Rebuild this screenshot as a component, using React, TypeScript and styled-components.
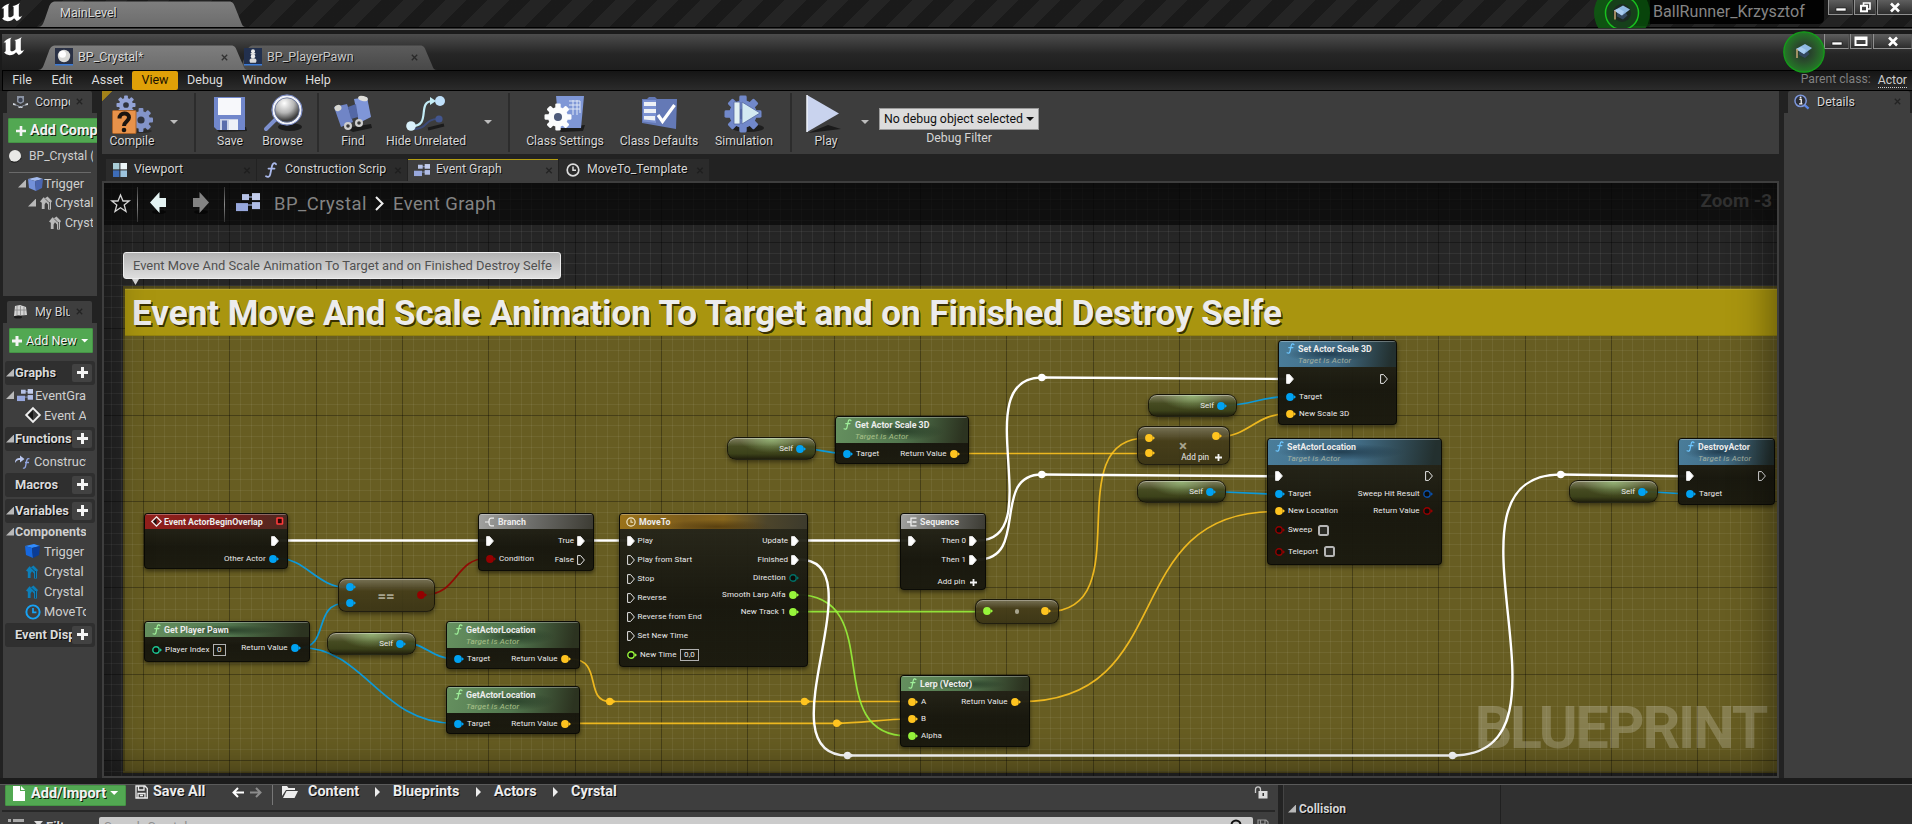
import React from 'react';
import styled, { createGlobalStyle, css } from 'styled-components';

const Global = createGlobalStyle`
  * { box-sizing: border-box; }
  html, body { margin: 0; padding: 0; background: #1b1b1b; overflow: hidden; }
  body { font-family: Roboto, "Liberation Sans", sans-serif; font-size: 12.5px; color: #d6d6d6; }
  svg { display: block; flex: none; overflow: visible; }
`;

const shadow = css`text-shadow: 1px 1px 0 rgba(0, 0, 0, 0.85);`;

/* ---------- window frame ---------- */

const Screen = styled.div`
  width: 1912px;
  height: 824px;
  display: flex;
  flex-direction: column;
  overflow: hidden;
  background: #1b1b1b;
`;

const MainTitleBar = styled.div`
  position: relative;
  height: 27px;
  flex: none;
  display: flex;
  align-items: flex-end;
  justify-content: space-between;
  background: linear-gradient(rgba(0, 0, 0, 0.1), rgba(0, 0, 0, 0.1)),
    repeating-linear-gradient(135deg, #1d1d1d 0 15px, #282828 15px 30px);
`;

const Rule = styled.div`
  height: 7px;
  flex: none;
  border-top: 1px solid #000;
  background: linear-gradient(#303030 1px, #686868 1px 2px, #1b1b1b 2px);
`;

const TitleBar = styled.div`
  position: relative;
  height: 36px;
  flex: none;
  margin-left: 2px;
  display: flex;
  justify-content: space-between;
  align-items: flex-end;
  background: linear-gradient(#4c4c4c, #262626 55%, #1e1e1e);
`;

const TitleLeft = styled.div`
  display: flex;
  align-items: flex-end;
  height: 100%;
`;

const LogoSlot = styled.div<{ $w: number }>`
  width: ${p => p.$w}px;
  height: 100%;
  padding: 3px 0 0 1px;
`;

const DocTab = styled.div<{ $w: number; $h: number; $active?: boolean; $overlap?: boolean }>`
  position: relative;
  width: ${p => p.$w}px;
  height: ${p => p.$h}px;
  margin-left: ${p => (p.$overlap ? -12 : 0)}px;
  display: flex;
  align-items: center;
  padding-left: ${p => (p.$h > 25 ? 22 : p.$overlap ? 8 : 17)}px;
  padding-bottom: 1px;
  color: ${p => (p.$active ? '#d8d8d8' : '#c8c8c8')};
  z-index: ${p => (p.$active ? 2 : 1)};
  ${shadow}
`;

const TabShape = styled.svg`
  position: absolute;
  inset: 0;
  z-index: -1;
`;

const DocTitle = styled.span<{ $flush?: boolean }>`
  flex: 1;
  padding: 0 0 2px ${p => (p.$flush ? 0 : 5)}px;
  font-size: 12.5px;
  white-space: nowrap;
`;

const CloseMark = styled.span<{ $right?: number }>`
  width: 7px;
  height: 7px;
  margin-right: ${p => p.$right ?? 0}px;
  flex: none;
  opacity: 0.75;
`;

const WindowButtons = styled.div<{ $w: number }>`
  display: flex;
  gap: 1px;
  width: ${p => p.$w}px;
  height: 15px;
  align-self: flex-start;
`;

const WindowButton = styled.div<{ $w: number }>`
  width: ${p => p.$w}px;
  height: 15px;
  flex: none;
  display: flex;
  align-items: center;
  justify-content: center;
  border: 1px solid #909090;
  border-top: 0;
  border-right-color: #555;
  background: linear-gradient(#5e5e5e, #2d2d2d);
`;

const ProjectArea = styled.div`
  display: flex;
  height: 27px;
  align-items: flex-start;
`;

const ProjectPlate = styled.div`
  height: 24px;
  width: 190px;
  margin-right: 4px;
  padding-left: 19px;
  border-radius: 0 0 5px 0;
  background: #020202;
  color: #858585;
  font-size: 16.1px;
  line-height: 24px;
  white-space: nowrap;
`;

const TutorialBadge = styled.svg<{ $x: number; $y: number; $clip?: boolean }>`
  position: absolute;
  left: ${p => p.$x}px;
  top: ${p => p.$y}px;
  z-index: 3;
  overflow: ${p => (p.$clip ? 'hidden' : 'visible')};
`;

const MenuBar = styled.div`
  height: 21px;
  flex: none;
  margin-left: 2px;
  display: flex;
  align-items: center;
  border: solid #000;
  border-width: 1px 0 1px 1px;
  background: linear-gradient(#151515, #2b2b2b);
  line-height: 18px;
`;

const MenuItem = styled.div<{ $w: number; $on?: boolean }>`
  width: ${p => p.$w}px;
  height: 19px;
  text-align: center;
  font-size: 12.5px;
  border-radius: 2px;
  white-space: nowrap;
  color: ${p => (p.$on ? '#1a1200' : '#dcdcdc')};
  background: ${p => (p.$on ? '#dfa008' : 'transparent')};
`;

const ParentClass = styled.div`
  margin-left: auto;
  display: flex;
  align-items: center;
  gap: 7px;
  padding-right: 5px;
  color: #808080;
  font-size: 12.2px;
  span { line-height: 16px; margin-top: -3px; }
  b { font-weight: 400; color: #cdcdcd; line-height: 14px; border-bottom: 1px dotted #cdcdcd; }
`;

/* ---------- columns ---------- */

const Workspace = styled.div`
  height: 693px;
  flex: none;
  display: flex;
  padding-left: 3px;
  background: #222;
  border-bottom: 6px solid #1b1b1b;
`;

const SideColumn = styled.div`
  width: 94px;
  flex: none;
  display: flex;
  flex-direction: column;
  overflow: hidden;
  margin-right: 5px;
`;

const PanelTab = styled.div<{ $w: number; $gap?: number }>`
  width: ${p => p.$w}px;
  height: 22px;
  margin: ${p => p.$gap ?? 0}px 0 0 4px;
  flex: none;
  display: flex;
  align-items: center;
  padding: 0 9px 1px 6px;
  background: #3e3e3e;
  border-radius: 2px 2px 0 0;
  ${shadow}
`;

const PanelTitle = styled.span`
  flex: 1;
  margin: 0 6px 1px 7px;
  overflow: hidden;
  white-space: nowrap;
  font-size: 12.4px;
`;

const ComponentsPanel = styled.div`
  height: 183px;
  flex: none;
  padding-top: 5px;
  background: #3e3e3e;
`;

const BlueprintPanel = styled.div`
  flex: 1;
  padding-top: 5px;
  background: #3e3e3e;
  overflow: hidden;
`;

const GreenButton = styled.div<{ $w: number; $h: number; $ml: number; $size: number; $bold?: boolean; $pl?: number; $lift?: number }>`
  width: ${p => p.$w}px;
  height: ${p => p.$h}px;
  margin-left: ${p => p.$ml}px;
  padding: 0 0 ${p => p.$lift ?? 0}px ${p => p.$pl ?? 4}px;
  flex: none;
  display: flex;
  align-items: center;
  gap: 4px;
  overflow: hidden;
  white-space: nowrap;
  background: #52a852;
  border: 1px solid #459445;
  border-radius: 1px;
  color: #f2f2f2;
  font-size: ${p => p.$size}px;
  font-weight: ${p => (p.$bold ? 700 : 400)};
  ${shadow}
`;

const TreeRow = styled.div<{ $indent: number; $w?: number; $gap?: number; $h?: number; $bold?: boolean; $size?: number }>`
  height: ${p => p.$h ?? 20}px;
  width: ${p => p.$w ?? 90}px;
  padding: 0 0 1px ${p => p.$indent}px;
  display: flex;
  align-items: center;
  gap: ${p => p.$gap ?? 4}px;
  overflow: hidden;
  white-space: nowrap;
  font-size: ${p => p.$size ?? 12.8}px;
  font-weight: ${p => (p.$bold ? 700 : 400)};
  color: #cfcfcf;
`;

const Divider = styled.div`
  height: 1px;
  margin: 3px 6px 2px;
  background: #6a6a6a;
`;

const Category = styled.div<{ $mt?: number }>`
  height: 24px;
  width: 90px;
  margin: ${p => p.$mt ?? 0}px 0 0 2px;
  padding-bottom: 1px;
  display: flex;
  align-items: center;
  background: #2f2f2f;
  border-radius: 3px;
  font-weight: 700;
  font-size: 12.8px;
  color: #dadada;
  ${shadow}
`;

const Caret = styled.span<{ $hidden?: boolean }>`
  width: 8px;
  height: 8px;
  margin: 0 1px;
  flex: none;
  visibility: ${p => (p.$hidden ? 'hidden' : 'visible')};
  background: #b9b9b9;
  clip-path: polygon(100% 0, 100% 100%, 0 100%);
`;

const CategoryName = styled.span`
  flex: 1;
  overflow: hidden;
  white-space: nowrap;
`;

const PlusButton = styled.span`
  width: 20px;
  height: 18px;
  margin-right: 3px;
  flex: none;
  display: flex;
  align-items: center;
  justify-content: center;
  background: #424242;
  border-radius: 2px;
`;

const CenterColumn = styled.div`
  width: 1677px;
  flex: none;
  display: flex;
  flex-direction: column;
`;

const DetailsColumn = styled.div`
  margin-left: 5px;
  flex: 1;
  display: flex;
  flex-direction: column;
`;

const DetailsBody = styled.div`
  flex: 1;
  background: #3e3e3e;
`;

/* ---------- toolbar ---------- */

const Toolbar = styled.div`
  height: 63px;
  flex: none;
  display: flex;
  align-items: flex-start;
  background: linear-gradient(135deg, #a38319 7px, transparent 7.5px), #3d3d3d;
`;

const Tool = styled.div<{ $w: number }>`
  width: ${p => p.$w}px;
  height: 63px;
  padding-top: 4px;
  flex: none;
  display: flex;
  flex-direction: column;
  align-items: center;
  font-size: 12.2px;
  line-height: 17px;
  white-space: nowrap;
  ${shadow}
`;

const ToolArrow = styled.div<{ $ml?: number }>`
  width: 24px;
  margin: 29px 0 0 ${p => p.$ml ?? 0}px;
  display: flex;
  justify-content: center;
`;

const Down = styled.span<{ $c?: string; $s?: number }>`
  width: ${p => (p.$s ?? 4) * 2}px;
  height: ${p => p.$s ?? 4}px;
  flex: none;
  background: ${p => p.$c ?? '#bdbdbd'};
  clip-path: polygon(0 0, 100% 0, 50% 100%);
`;

const ToolSeparator = styled.div`
  width: 2px;
  height: 59px;
  margin: 2px 8px 0;
  flex: none;
  background: #2c2c2c;
`;

const DebugFilter = styled.div`
  width: 160px;
  margin-left: 2px;
  padding-top: 17px;
  text-align: center;
  font-size: 12.3px;
`;

const Combo = styled.div`
  height: 22px;
  margin-bottom: 1px;
  display: flex;
  align-items: center;
  justify-content: center;
  gap: 3px;
  background: #dcdcdc;
  border: 1px solid #9b9b9b;
  color: #101010;
  white-space: nowrap;
`;

const GraphTabs = styled.div`
  height: 27px;
  flex: none;
  display: flex;
  gap: 1px;
  padding: 5px 0 0 4px;
`;

const GraphTab = styled.div<{ $on?: boolean }>`
  width: 150px;
  height: 22px;
  display: flex;
  align-items: center;
  padding: 0 10px 1px 6px;
  font-size: 12.3px;
  background: ${p => (p.$on ? '#3e3e3e' : '#2b2b2b')};
  border-top: ${p => (p.$on ? '1px solid #b39d10' : '1px solid #2b2b2b')};
  ${shadow}
  svg { width: 16px; }
`;

const GraphTabName = styled.span`
  flex: 1;
  margin: 0 0 2px 6px;
  white-space: nowrap;
`;

/* ---------- graph ---------- */

const GraphFrame = styled.div`
  flex: 1;
  border: 2px solid #3e3e3e;
  display: flex;
`;

const Canvas = styled.div`
  position: relative;
  flex: 1;
  overflow: hidden;
  background: #262626;
`;

const CommentBox = styled.div`
  position: absolute;
  left: 19px;
  top: 103px;
  right: -20px;
  height: 487px;
  background: #675d22;
  border: 2px solid #51491a;
`;

const Layer = styled.svg`
  position: absolute;
  left: 0;
  top: 0;
`;

const CommentTitle = styled.div`
  position: absolute;
  left: 21px;
  top: 106px;
  right: 0;
  height: 47px;
  padding-left: 7px;
  background: #a9950f;
  border-top: 1px solid #b5a228;
  border-bottom: 1px solid #93820f;
  color: #ececec;
  font-weight: 700;
  font-size: 35px;
  line-height: 47px;
  white-space: nowrap;
  text-shadow: 1.5px 1.5px 0 rgba(40, 34, 0, 0.9);
`;

const Bubble = styled.div`
  position: absolute;
  left: 19px;
  top: 69px;
  width: 438px;
  height: 27px;
  padding-left: 9px;
  border: 1px solid #ededed;
  border-radius: 3px;
  background: linear-gradient(#b2b2b2, #dedede);
  color: #505050;
  font-size: 12.92px;
  line-height: 25px;
  white-space: nowrap;
  &::after {
    content: '';
    position: absolute;
    left: 8px;
    top: 26px;
    width: 7px;
    height: 6px;
    background: #cfcfcf;
    clip-path: polygon(0 0, 100% 0, 50% 100%);
  }
`;

const Vignette = styled.div`
  position: absolute;
  inset: 0;
  box-shadow: inset 0 0 44px rgba(0, 0, 0, 0.55);
`;

const Watermark = styled.div`
  position: absolute;
  right: 11px;
  bottom: 13px;
  font-weight: 700;
  font-size: 59px;
  letter-spacing: -2.2px;
  line-height: 70px;
  color: rgba(255, 255, 255, 0.21);
`;

const NavBar = styled.div`
  position: absolute;
  left: 0;
  right: 0;
  top: 0;
  height: 42px;
  display: flex;
  align-items: center;
  background: rgba(6, 6, 6, 0.68);
  color: #838383;
  font-size: 18.4px;
  letter-spacing: 0.45px;
  white-space: nowrap;
`;

const NavSlot = styled.div<{ $w: number; $pl?: number }>`
  width: ${p => p.$w}px;
  height: 100%;
  padding: 0 0 2px ${p => p.$pl ?? 0}px;
  flex: none;
  display: flex;
  align-items: center;
`;

const NavLine = styled.div`
  width: 1px;
  height: 35px;
  flex: none;
  background: linear-gradient(#333, #8b8b8b, #333);
`;

const ZoomLabel = styled.div`
  margin: -6px 5px 0 auto;
  font-weight: 700;
  font-size: 18.8px;
  letter-spacing: 0;
  color: #303030;
`;

type Tone = 'event' | 'plain' | 'pure' | 'call' | 'time';

const tones: Record<Tone, string> = {
  event: 'linear-gradient(90deg, #93201c, #7c1c19 55%, #4a2a22)',
  plain: 'linear-gradient(100deg, #a2a2a0, #6f6f6c 45%, #3c3b33)',
  pure: 'radial-gradient(ellipse at 50% 55%, rgba(30,50,32,.75), rgba(30,50,32,0) 45%), linear-gradient(100deg, #65905f, #52774f 50%, #2c3320 95%)',
  call: 'radial-gradient(ellipse at 42% 50%, rgba(24,48,64,.75), rgba(24,48,64,0) 45%), linear-gradient(100deg, #4a7d9a, #426d87 50%, #23302f 95%)',
  time: 'radial-gradient(ellipse at 52% 85%, rgba(60,40,8,.6), rgba(60,40,8,0) 40%), linear-gradient(100deg, #9b731a, #7d5d1c 35%, #86651c 55%, #4d452b 78%, #3c3a2c)',
};

const NodeBox = styled.div<{ $x: number; $y: number; $w: number; $h: number }>`
  position: absolute;
  left: ${p => p.$x - 104}px;
  top: ${p => p.$y - 183}px;
  width: ${p => p.$w}px;
  height: ${p => p.$h}px;
  border: 1px solid rgba(8, 8, 4, 0.85);
  border-radius: 4px;
  background: linear-gradient(rgba(40, 40, 28, 0.96), rgba(22, 22, 14, 0.96) 60%, rgba(25, 25, 15, 0.96));
  box-shadow: 0 2px 4px rgba(0, 0, 0, 0.5);
  overflow: hidden;
`;

const NodeHeader = styled.div<{ $tone: Tone; $tall?: boolean }>`
  position: relative;
  height: ${p => (p.$tall ? 26 : 15)}px;
  padding: 1px 4px 0 6px;
  display: flex;
  gap: 3px;
  background: ${p => tones[p.$tone]};
  box-shadow: inset 0 1px 0 rgba(255, 255, 255, 0.3);
`;

const NodeIcon = styled.div`
  width: 10px;
  height: 13px;
  flex: none;
  display: flex;
  align-items: center;
  justify-content: center;
`;

const NodeNames = styled.div`
  flex: 1;
  white-space: nowrap;
`;

const NodeName = styled.div`
  font-weight: 700;
  font-size: 8.8px;
  line-height: 14px;
  color: #ececec;
`;

const NodeSub = styled.div<{ $tone: Tone }>`
  font-style: italic;
  font-size: 8px;
  letter-spacing: 0.2px;
  line-height: 9px;
  color: ${p => (p.$tone === 'call' ? '#a3b0a0' : '#a9c088')};
`;

const NodeBody = styled.div`
  display: flex;
  justify-content: space-between;
  padding: 2px 7.8px 0 6.5px;
`;

const PinColumn = styled.div<{ $right?: boolean }>`
  display: flex;
  flex-direction: column;
  align-items: ${p => (p.$right ? 'flex-end' : 'flex-start')};
`;

const PinRow = styled.div<{ $h: number; $right?: boolean; $gap: number }>`
  height: ${p => p.$h}px;
  display: flex;
  flex-direction: ${p => (p.$right ? 'row-reverse' : 'row')};
  align-items: center;
  gap: ${p => p.$gap}px;
  font-size: 8px;
  letter-spacing: 0.1px;
  line-height: 10px;
  white-space: nowrap;
  color: #ececec;
`;

const ValueBox = styled.span`
  height: 12px;
  min-width: 12px;
  padding: 0 3px;
  border: 1px solid #b0b0b0;
  text-align: center;
`;

const CheckBox = styled.span`
  width: 11px;
  height: 11px;
  margin-left: 2px;
  border: 2px solid #b5b5b5;
  border-radius: 2.5px;
  background: #2a2a24;
`;

const SelfPill = styled.div<{ $x: number; $y: number }>`
  position: absolute;
  left: ${p => p.$x - 104}px;
  top: ${p => p.$y - 183}px;
  width: 89px;
  height: 23px;
  padding-right: 9px;
  display: flex;
  align-items: center;
  justify-content: flex-end;
  gap: 3px;
  border: 1px solid rgba(20, 18, 6, 0.85);
  border-radius: 9px;
  background: radial-gradient(ellipse 32px 14px at 50% 5%, rgba(160, 200, 130, 0.7), transparent),
    linear-gradient(rgba(130, 130, 100, 0.95), rgba(68, 74, 34, 0.95) 40%, rgba(58, 64, 26, 0.95) 75%, rgba(28, 28, 12, 0.95));
  box-shadow: 0 2px 4px rgba(0, 0, 0, 0.45), inset 0 1px 0 rgba(255, 255, 255, 0.35);
  font-size: 8px;
  line-height: 10px;
  color: #ececec;
`;

const CompactBox = styled.div<{ $x: number; $y: number; $w: number; $h: number; $pad: number }>`
  position: absolute;
  left: ${p => p.$x - 104}px;
  top: ${p => p.$y - 183}px;
  width: ${p => p.$w}px;
  height: ${p => p.$h}px;
  padding: ${p => p.$pad}px 7.5px 0 6.5px;
  display: flex;
  justify-content: space-between;
  border: 1px solid rgba(20, 18, 6, 0.85);
  border-radius: 8px;
  background: linear-gradient(rgba(120, 115, 90, 0.9), rgba(68, 60, 26, 0.92) 38%, rgba(58, 52, 22, 0.92));
  box-shadow: 0 2px 4px rgba(0, 0, 0, 0.45), inset 0 1px 0 rgba(255, 255, 255, 0.3);
`;

const CompactLabel = styled.div<{ $size: number; $mt: number }>`
  margin-top: ${p => p.$mt}px;
  font-weight: 700;
  font-size: ${p => p.$size}px;
  line-height: 16px;
  color: #a7a48e;
`;

const Dot = styled.div`
  width: 4px;
  height: 5px;
  margin-top: 5px;
  border-radius: 2px;
  background: #a7a48e;
`;

const CompactPins = styled.div<{ $mt?: number }>`
  margin-top: ${p => p.$mt ?? 0}px;
`;

const AddPin = styled.div`
  position: absolute;
  right: 7px;
  bottom: 2px;
  display: flex;
  align-items: center;
  gap: 6px;
  font-size: 8.2px;
  line-height: 10px;
  color: #ececec;
`;

/* ---------- content browser strip ---------- */

const BottomArea = styled.div`
  flex: 1;
  display: flex;
  border-top: 1px solid #5a5a5a;
  background: #232323;
  overflow: hidden;
`;

const Browser = styled.div`
  width: 1278px;
  padding-left: 2px;
  background: #3e3e3e;
`;

const BrowserBar = styled.div`
  height: 27px;
  display: flex;
  align-items: flex-start;
  border-bottom: 2px solid #272727;
  padding-left: 3px;
  margin-right: 3px;
`;

const BrowserCell = styled.div<{ $w?: number; $pl?: number; $gap?: number }>`
  width: ${p => (p.$w ? p.$w + 'px' : 'auto')};
  height: 16px;
  padding: 0 0 2px ${p => p.$pl ?? 0}px;
  flex: none;
  display: flex;
  align-items: center;
  gap: ${p => p.$gap ?? 4}px;
  font-weight: 700;
  font-size: 14.4px;
  line-height: 14px;
  color: #ededed;
  white-space: nowrap;
  ${shadow}
`;

const CrumbArrow = styled.span`
  width: 5px;
  height: 10px;
  background: #eee;
  clip-path: polygon(0 0, 100% 50%, 0 100%);
`;

const BrowserLine = styled.div`
  width: 1px;
  height: 20px;
  background: #777;
  margin-right: 9px;
`;

const FilterRow = styled.div`
  display: flex;
  height: 20px;
  margin-top: 5px;
  padding-left: 6px;
`;

const FilterLabel = styled.div`
  width: 75px;
  padding: 3px 0 0 10px;
  display: flex;
  gap: 3px;
  font-weight: 700;
  font-size: 13px;
  line-height: 14px;
  ${shadow}
`;

const SearchField = styled.div`
  width: 1154px;
  height: 24px;
  padding: 1px 10px 0 5px;
  display: flex;
  justify-content: space-between;
  background: #cbcbcb;
  border-radius: 2px;
  color: #8e8e8e;
  font-size: 13px;
  line-height: 17px;
`;

const SaveSearch = styled.svg`
  margin: 2px 0 0 4px;
`;

const DetailsStrip = styled.div`
  margin-left: 5px;
  flex: 1;
  display: flex;
  background: #303030;
  border-left: 1px solid #444;
`;

const PropertyNames = styled.div`
  width: 217px;
  border-right: 1px solid #202020;
  padding: 15px 0 0 3px;
`;

const PropertyGroup = styled.div`
  display: flex;
  align-items: center;
  gap: 2px;
  height: 17px;
  font-weight: 700;
  font-size: 12px;
  ${shadow}
`;

/* ---------- drawings ---------- */

const UnrealLogo = () => (
  <svg width="22" height="19" viewBox="0 0 22 19">
    <path
      fill="#fff"
      d="M0.5 6.2C1.8 3.6 4.4 1.5 8.6 0.6C7.6 1.6 7.4 2.3 7.4 3.4V13.4C7.9 14.3 9.1 14.6 10.3 14.1C11.3 13.6 12.1 13 12.6 12.3V4.6C12.6 3.7 12.1 3.2 11.3 3.1C13.6 2.6 16.8 1.6 18.9 0C18.1 1.2 17.8 2 17.8 3.1V12.4C17.8 13.6 18.3 14 19.1 13.8C19.8 13.6 20.6 13.1 21.3 12.4C20.2 15 18.2 16.9 15.7 18.1L13.1 15.2C11.5 17 9.4 18.3 6.6 18.3C4.1 18.1 1.9 16.9 1.1 15.1C1.9 15.1 2.7 14.8 2.7 13.6V5.9C2.7 4.9 1.5 5.2 0.5 6.2Z"
    />
  </svg>
);

const Cross = () => (
  <svg width="7" height="7" viewBox="0 0 7 7">
    <path d="M.8.8 6.2 6.2M6.2.8.8 6.2" stroke="#1b1b1b" strokeWidth="1.3" />
  </svg>
);

const TabBg = ({ w, h, active }: { w: number; h: number; active?: boolean }) => (
  <TabShape width={w} height={h} viewBox={`0 0 ${w} ${h}`}>
    <defs>
      <linearGradient id={`tab${w}${h}`} x1="0" y1="0" x2="0" y2="1">
        <stop offset="0" stopColor={active ? '#7e7e7e' : '#5c5c5c'} />
        <stop offset="1" stopColor={active ? '#6c6c6c' : '#484848'} />
      </linearGradient>
    </defs>
    <path
      d={`M0 ${h}C4 ${h} 5 ${h - 3} 6.500 ${h - 7}L11 6C12.500 2 14 .5 18 .5H${w - 17}C${w - 13} .5 ${w - 12} 3 ${w - 11} 6L${w - 5} ${h - 5}C${w - 4} ${h - 2} ${w - 3} ${h} ${w} ${h}Z`}
      fill={`url(#tab${w}${h})`}
    />
  </TabShape>
);

const SphereTile = () => (
  <svg width="18" height="18" viewBox="0 0 18 18">
    <rect width="18" height="17" fill="#2a3145" />
    <circle cx="9" cy="8" r="6.2" fill="#d9d9d6" />
    <circle cx="7.500" cy="6.300" r="3.500" fill="#fff" />
    <rect y="16" width="18" height="1.500" fill="#3b7bd8" />
  </svg>
);

const PawnTile = () => (
  <svg width="18" height="18" viewBox="0 0 18 18">
    <rect width="18" height="17" fill="#22304e" />
    <circle cx="9" cy="3.200" r="2" fill="#ededed" />
    <rect x="6.500" y="4.900" width="5" height="1.500" rx=".7" fill="#e0e0e0" />
    <circle cx="9" cy="8.300" r="2.200" fill="#ededed" />
    <path d="M5.500 13C5.500 10.500 7 10.200 9 10.200S12.500 10.500 12.500 13L11.800 14.800H6.200Z" fill="#d9d9d9" />
    <rect y="16" width="18" height="1.500" fill="#3b7bd8" />
  </svg>
);

const Cap = ({ cx, cy }: { cx: number; cy: number }) => (
  <g transform={`translate(${cx} ${cy})`}>
    <path d="M-5-1 3-1 5.500 3 1 7-5 4Z" fill="#33475c" />
    <path d="M-8-2 1-7 8-3 0 3Z" fill="#8fb9e2" />
    <path d="M-3-4 2-1 0 3-8-2Z" fill="#a9cdf0" />
    <path d="M-7-2V7" stroke="#c9a877" strokeWidth="1.500" />
  </g>
);

const MainBadge = () => (
  <TutorialBadge width="56" height="28" viewBox="0 0 56 28" $x={1594} $y={0} $clip>
    <circle cx="28" cy="13" r="28" fill="#0e5a12" opacity=".9" />
    <path d="M28 0H56V26H34Z" fill="#063a08" opacity=".55" />
    <circle cx="28" cy="13" r="16.500" fill="#16401a" stroke="#18c01e" strokeWidth="1.500" />
    <circle cx="28" cy="13" r="9" fill="#1c2a22" />
    <Cap cx={28} cy={12.500} />
  </TutorialBadge>
);

const EditorBadge = () => (
  <TutorialBadge width="42" height="42" viewBox="0 0 42 42" $x={1781} $y={-3}>
    <defs>
      <radialGradient id="bdg">
        <stop offset="0" stopColor="#20302a" />
        <stop offset=".5" stopColor="#2a4f2c" />
        <stop offset="1" stopColor="#237a26" />
      </radialGradient>
    </defs>
    <circle cx="21" cy="21" r="20.200" fill="url(#bdg)" stroke="#12a018" strokeWidth="1.200" />
    <Cap cx={21} cy={20} />
  </TutorialBadge>
);

const MinIcon = () => (
  <svg width="12" height="11"><rect x="1" y="6" width="10" height="3" fill="#fff" stroke="#111" strokeWidth=".6" /></svg>
);
const MaxIcon = () => (
  <svg width="14" height="11"><path d="M1.500 1.500H12.500V9H1.500Z M1.500 3H12.500" fill="none" stroke="#fff" strokeWidth="2" /></svg>
);
const RestoreIcon = () => (
  <svg width="12" height="11"><path d="M4.500 3V1H11V7H9" fill="none" stroke="#fff" strokeWidth="1.600" /><rect x="2" y="3.800" width="6" height="5.500" fill="none" stroke="#fff" strokeWidth="2" /></svg>
);
const XIcon = () => (
  <svg width="12" height="11"><path d="M2 1.500 10 9.500M10 1.500 2 9.500" stroke="#fff" strokeWidth="2.600" /></svg>
);

const Plus = ({ s = 11, w = 3 }: { s?: number; w?: number }) => (
  <svg width={s} height={s} viewBox={`0 0 ${s} ${s}`}>
    <path d={`M${s / 2} 0V${s}M0 ${s / 2}H${s}`} stroke="#f4f4f4" strokeWidth={w} />
  </svg>
);

const GraphIcon = ({ s = 16 }: { s?: number }) => (
  <svg width={s} height={s * 0.8} viewBox="0 0 24 19">
    <path d="M9 4h9M10 12h7" stroke="#7f8cb0" strokeWidth="1.500" />
    <rect x="6" y="1" width="7" height="6" fill="#b6c2e6" />
    <rect x="16" y="0" width="8" height="7" fill="#c3cdec" />
    <rect x="0" y="10" width="12" height="8" fill="#97a7dc" />
    <rect x="16" y="9" width="8" height="7" fill="#b0bde6" />
  </svg>
);

const ViewportIcon = () => (
  <svg width="14" height="14" viewBox="0 0 14 14">
    <rect width="6.400" height="6.400" fill="#a9cdd8" />
    <rect x="7.400" width="6.600" height="6.400" fill="#ecf6f8" />
    <rect y="7.400" width="6.400" height="6.600" fill="#3d6cb8" />
    <rect x="7.400" y="7.400" width="6.600" height="6.600" fill="#9dc4dd" />
  </svg>
);

const FnMark = ({ c, w = 9, h = 13 }: { c: string; w?: number; h?: number }) => (
  <svg width={w} height={h} viewBox="0 0 12 16">
    <path d="M11 2.200C9.500.4 7.600 1 7 4L5.200 12.500C4.700 14.800 3 15.500 1 14.300M3.500 6.600H9.500" fill="none" stroke={c} strokeWidth="1.800" strokeLinecap="round" />
  </svg>
);

const ClockIcon = ({ s, c }: { s: number; c: string }) => (
  <svg width={s} height={s} viewBox="0 0 14 14">
    <circle cx="7" cy="7" r="5.800" fill="none" stroke={c} strokeWidth="1.700" />
    <path d="M7 3.500V7.300H10" fill="none" stroke={c} strokeWidth="1.500" />
  </svg>
);

const HouseIcon = ({ c }: { c: string }) => (
  <svg width="12" height="14" viewBox="0 0 12 14">
    <path d="M0 5.500 3.500 1.200 5 2.200 7.500 .5 12 5 11 6.800V13.500H8V8.500L6 6.200 4.600 8.500V13H1.800V6.800Z" fill={c} />
    <path d="M9.500 6V13M5 2.500 9 6.500" fill="none" stroke="#1f1f1f" strokeWidth=".6" />
  </svg>
);

const CubeIcon = ({ a, b, c }: { a: string; b: string; c: string }) => (
  <svg width="15" height="14" viewBox="0 0 15 14">
    <path d="M0 2 9 0 15 2 7 4Z" fill={a} />
    <path d="M0 2 7 4 8 14 1 11Z" fill={b} />
    <path d="M7 4 15 2 14 11 8 14Z" fill={c} />
  </svg>
);

const Gear = ({ cx, cy, r, fill, hole }: { cx: number; cy: number; r: number; fill: string; hole: string }) => (
  <g transform={`translate(${cx} ${cy})`}>
    {[0, 45, 90, 135].map(a => (
      <rect key={a} x={-r * 0.2} y={-r} width={r * 0.4} height={r * 2} rx={r * 0.08} fill={fill} transform={`rotate(${a})`} />
    ))}
    <circle r={r * 0.74} fill={fill} />
    <circle r={r * 0.3} fill={hole} />
  </g>
);

const CompileIcon = () => (
  <svg width="40" height="38" viewBox="0 0 40 38">
    <ellipse cx="28" cy="36" rx="12" ry="2" fill="#222" opacity=".7" />
    <Gear cx={14} cy={10} r={9.500} fill="#93a3d6" hole="#30343f" />
    <Gear cx={29} cy={25} r={12} fill="#8394c9" hole="#30343f" />
    <rect x=".5" y="15.500" width="23.500" height="23" rx="1" fill="#e8924a" stroke="#a8622a" />
    <path d="M7.500 23.500C7.500 17 17 17 17 22.500C17 26.500 12 26.500 12 31" fill="none" stroke="#1a1410" strokeWidth="4" />
    <circle cx="12" cy="35" r="2.300" fill="#1a1410" />
  </svg>
);

const SaveIcon = () => (
  <svg width="34" height="38" viewBox="0 0 34 38">
    <path d="M4 35 33 32 34 36 6 37Z" fill="#1e1e1e" />
    <path d="M1 2H32V35H4L1 32Z" fill="#7187cb" />
    <path d="M5 3H28V20H5Z" fill="#f7f8fb" />
    <path d="M7 24H25V35H7Z" fill="#c9d1e6" />
    <path d="M9 25.500H14V35H9Z" fill="#5a6dab" />
    <path d="M16 25H25V35H16Z" fill="#eef1f8" />
  </svg>
);

const BrowseIcon = () => (
  <svg width="40" height="38" viewBox="0 0 40 38">
    <defs>
      <radialGradient id="lens" cx=".4" cy=".25" r=".8">
        <stop offset="0" stopColor="#ffffff" />
        <stop offset=".45" stopColor="#b5b5b5" />
        <stop offset=".8" stopColor="#3d3d3d" />
        <stop offset="1" stopColor="#555" />
      </radialGradient>
    </defs>
    <ellipse cx="27" cy="32" rx="12" ry="4" fill="#1b1b1b" />
    <path d="M3 34 13 24" stroke="#7d90cf" strokeWidth="4" strokeLinecap="round" />
    <circle cx="24" cy="15" r="13.500" fill="url(#lens)" stroke="#f1f3fa" strokeWidth="2.400" />
    <circle cx="24" cy="15" r="15.200" fill="none" stroke="#7a8ccc" />
    <circle cx="24" cy="15" r="12.200" fill="none" stroke="#5f6c94" strokeWidth=".8" />
  </svg>
);

const FindIcon = () => (
  <svg width="40" height="38" viewBox="0 0 40 38">
    <path d="M12 33 38 29 39 33 20 37Z" fill="#1b1b1b" />
    <path d="M1 12 14 9 20 27 8 32Z" fill="#7085c6" />
    <path d="M21 4 34 2 38 22 26 28Z" fill="#7f96d8" />
    <path d="M15 12 23 9 25 22 18 24Z" fill="#5468a6" />
    <ellipse cx="5" cy="13" rx="3.500" ry="3" fill="#d7d7d2" transform="rotate(-25 5 13)" />
    <ellipse cx="30" cy="3.500" rx="5" ry="2.500" fill="#e0dfda" transform="rotate(15 30 3.500)" />
    <circle cx="15" cy="31" r="4" fill="#cfcfcf" /><circle cx="15" cy="31" r="1.800" fill="#3a3a3a" />
    <circle cx="26" cy="28" r="4" fill="#cfcfcf" /><circle cx="26" cy="28" r="1.800" fill="#3a3a3a" />
  </svg>
);

const HideIcon = () => (
  <svg width="40" height="38" viewBox="0 0 40 38">
    <path d="M8 34C22 34 18 24 32 24" stroke="#3c4b78" strokeWidth="2" fill="none" />
    <circle cx="33" cy="24" r="3.600" fill="#43568f" />
    <path d="M22 34 38 30" stroke="#1b1b1b" strokeWidth="3" />
    <path d="M6 31C26 31 10 6 27 6" stroke="#c3ecf6" strokeWidth="2.200" fill="none" />
    <path d="M24 2 30 6 24 10Z" fill="#c3ecf6" />
    <circle cx="5" cy="31" r="4.800" fill="#d9f0fb" />
    <circle cx="34" cy="6" r="5" fill="#bfe0fa" />
  </svg>
);

const SettingsIcon = () => (
  <svg width="40" height="38" viewBox="0 0 40 38">
    <path d="M10 33 40 30 38 36 16 37Z" fill="#1b1b1b" />
    <path d="M11 1H39L36 33H14Z" fill="#7f97d6" />
    <path d="M24 6H35V18M24 10H35M24 14H35M28 5V20M32 5V20" stroke="#dfe7f7" fill="none" />
    <Gear cx={13} cy={22} r={13.500} fill="#fbfcfd" hole="#4d5a7a" />
  </svg>
);

const DefaultsIcon = () => (
  <svg width="40" height="38" viewBox="0 0 40 38">
    <path d="M3 4H8L10 2H16L18 4H38L37 34 3 28Z" fill="#6479b6" />
    <path d="M4 5H17V28L4 26.500Z" fill="#7d93d2" />
    <path d="M5 7H17V11H5ZM5 14H17V18H5ZM5 21H16V25.500L5 24.500Z" fill="#eef1f6" />
    <path d="M19 20 23.500 26.500 35.500 10" fill="none" stroke="#fff" strokeWidth="3.200" />
  </svg>
);

const SimulationIcon = () => (
  <svg width="40" height="38" viewBox="0 0 40 38">
    <ellipse cx="24" cy="33" rx="16" ry="4" fill="#1e1e1e" />
    <Gear cx={19} cy={19} r={18.500} fill="#7188ca" hole="#5569a8" />
    <path d="M10 7H16V29H10Z" fill="#e1f0f3" stroke="#56689f" strokeWidth=".8" />
    <path d="M18 7 36 18 18 29Z" fill="#d3e9f2" stroke="#56689f" strokeWidth=".8" />
  </svg>
);

const PlayIcon = () => (
  <svg width="40" height="38" viewBox="0 0 40 38">
    <path d="M2 38 35 34 22 30Z" fill="#1b1b1b" />
    <path d="M1 0 33 18.500 1 37Z" fill="#c9d3ee" />
    <path d="M1 0V37" stroke="#eff3fb" strokeWidth="1.500" />
  </svg>
);

const NavArrow = ({ c, flip }: { c: string; flip?: boolean }) => (
  <svg width="17" height="22" viewBox="0 0 17 22">
    <ellipse cx="9" cy="20" rx="7" ry="2" fill="#000" opacity=".6" />
    <path transform={flip ? 'translate(17 0) scale(-1 1)' : undefined} d="M0 10.500 9.500 0V6H16V15H9.500V21Z" fill={c} />
  </svg>
);

const MagnifierInfo = () => (
  <svg width="16" height="16" viewBox="0 0 17 16">
    <path d="M11 11 15.500 15" stroke="#5b86e8" strokeWidth="2.400" />
    <circle cx="7" cy="6.800" r="6" fill="#2c2e36" stroke="#7d97dc" strokeWidth="1.600" />
    <path d="M5.700 5.300H7.700V10M5.400 10H9" stroke="#f0f0f0" strokeWidth="1.400" fill="none" />
    <circle cx="7" cy="3.200" r="1" fill="#f0f0f0" />
  </svg>
);

const ComponentsIcon = () => (
  <svg width="15" height="14" viewBox="0 0 15 14">
    <path d="M4 1H11V7L7.500 9 4 7Z" fill="#8b93a3" />
    <circle cx="7.500" cy="5" r="2.200" fill="#3a4050" />
    <path d="M0 8 3 9V10.500L0 10ZM15 8 12 9V10.500L15 10ZM5.500 11H9.500V13H5.500Z" fill="#d2d6dc" />
    <path d="M2 9.500 7.500 12 13 9.500" stroke="#8b93a3" fill="none" />
  </svg>
);

const BlueprintIcon = () => (
  <svg width="15" height="14" viewBox="0 0 15 14">
    <path d="M2 1 7 0 13 2 14 10 1 11Z" fill="#d4d4d4" />
    <path d="M4 1 4 10M7.500 1V10M11 2V10M2 5H13" stroke="#888" strokeWidth=".8" />
    <ellipse cx="5" cy="12" rx="4" ry="1.500" fill="#1b1b1b" />
  </svg>
);

const Diamond = ({ s }: { s: number }) => (
  <svg width={s} height={s} viewBox="0 0 14 14">
    <path d="M7 1 13 7 7 13 1 7Z" fill="none" stroke="#f0f0f0" strokeWidth="1.600" />
    <path d="M7 3V11L3 7Z" fill="#151515" />
  </svg>
);

const OverrideIcon = () => (
  <svg width="15" height="14" viewBox="0 0 15 14">
    <path d="M0 8C0 4 2 3 5 3V.5L9.500 4 5 7.500V5C3 5 1.500 5.500 0 8Z" fill="#b9c6ee" />
    <path d="M14.500 4C13 3 12 4 11.600 6L10.600 11C10.200 13 9 13.500 8 13M10 7.500H14" stroke="#91a4e0" strokeWidth="1.300" fill="none" />
  </svg>
);

/* ---------- pins and nodes ---------- */

const C = {
  obj: '#00a2f2',
  vec: '#ffc41f',
  flt: '#97f53b',
  bool: '#940000',
  int: '#1dc592',
  byte: '#006f66',
  struct: '#0a4fa8',
};

const ExecPin = ({ on }: { on?: boolean }) => (
  <svg width="8" height="10" viewBox="0 0 8 10">
    <path d="M.6.6H3.600L7.400 5 3.600 9.400H.6Z" fill={on ? '#fff' : 'none'} stroke="#e6e6e6" strokeWidth="1" />
  </svg>
);

const DataPin = ({ c, on }: { c: string; on?: boolean }) => (
  <svg width="10" height="8" viewBox="0 0 10 8">
    <path d="M8 2.300 10 4 8 5.700Z" fill={c} />
    <circle cx="4" cy="4" r={on ? 3.900 : 3.200} fill={on ? c : '#0c0c08'} stroke={c} strokeWidth={on ? 0 : 1.400} />
  </svg>
);

type Pin = { t?: string; c?: string; on?: boolean; h?: number; value?: string; check?: boolean; add?: boolean };

const Row = ({ p, right }: { p: Pin; right?: boolean }) => {
  const exec = !p.c && !p.add;
  return (
    <PinRow $h={p.h ?? (exec ? 19 : 17.2)} $right={right} $gap={exec ? 3 : p.add ? 5 : 3.5}>
      {p.add ? <Plus s={7} w={1.8} /> : exec ? <ExecPin on={p.on} /> : <DataPin c={p.c!} on={p.on} />}
      {p.t && <span>{p.t}</span>}
      {p.value && <ValueBox>{p.value}</ValueBox>}
      {p.check && <CheckBox />}
    </PinRow>
  );
};

type NodeSpec = {
  x: number; y: number; w: number; h: number;
  tone: Tone; name: string; sub?: boolean;
  left: Pin[]; right: Pin[];
};

const BranchMark = () => (
  <svg width="10" height="10" viewBox="0 0 10 10">
    <path d="M0 5H4M9 1.200H6C4 1.200 4 3 4 5S4 8.800 6 8.800H9" fill="none" stroke="#eee" strokeWidth="1.200" />
  </svg>
);
const SequenceMark = () => (
  <svg width="10" height="10" viewBox="0 0 10 10">
    <path d="M0 5H4M4 .5V9.500M4 1.200H9.500M5.500 5H9.500M4 8.800H9.500" fill="none" stroke="#eee" strokeWidth="1.300" />
  </svg>
);

const headIcon = (n: NodeSpec) => {
  if (n.tone === 'event') return <Diamond s={11} />;
  if (n.tone === 'time') return <ClockIcon s={10} c="#f0e6c8" />;
  if (n.tone === 'plain') return n.name === 'Branch' ? <BranchMark /> : <SequenceMark />;
  return <FnMark c={n.tone === 'pure' ? '#9ff09a' : '#6cc6ff'} w={9} h={11} />;
};

const GraphNode = ({ n }: { n: NodeSpec }) => (
  <NodeBox $x={n.x} $y={n.y} $w={n.w} $h={n.h}>
    <NodeHeader $tone={n.tone} $tall={n.sub}>
      <NodeIcon>{headIcon(n)}</NodeIcon>
      <NodeNames>
        <NodeName>{n.name}</NodeName>
        {n.sub && <NodeSub $tone={n.tone}>Target is Actor</NodeSub>}
      </NodeNames>
      {n.tone === 'event' && (
        <svg width="8" height="12" viewBox="0 0 8 12">
          <rect x="2" y="3" width="5.500" height="6" rx=".5" fill="#2a0505" stroke="#ff3b3b" strokeWidth="1.600" />
        </svg>
      )}
    </NodeHeader>
    <NodeBody>
      <PinColumn>{n.left.map((p, i) => <Row key={i} p={p} />)}</PinColumn>
      <PinColumn $right>{n.right.map((p, i) => <Row key={i} p={p} right />)}</PinColumn>
    </NodeBody>
  </NodeBox>
);

const nodes: NodeSpec[] = [
  { x: 144, y: 513, w: 144, h: 56, tone: 'event', name: 'Event ActorBeginOverlap', left: [], right: [{ on: true }, { t: 'Other Actor', c: C.obj, on: true }] },
  { x: 478, y: 513, w: 116, h: 58, tone: 'plain', name: 'Branch', left: [{ on: true }, { t: 'Condition', c: C.bool, on: true }], right: [{ t: 'True', on: true }, { t: 'False' }] },
  { x: 144, y: 621, w: 166, h: 41, tone: 'pure', name: 'Get Player Pawn', left: [{ t: 'Player Index', c: C.int, value: '0', h: 21 }], right: [{ t: 'Return Value', c: C.obj, on: true }] },
  { x: 446, y: 621, w: 134, h: 48, tone: 'pure', name: 'GetActorLocation', sub: true, left: [{ t: 'Target', c: C.obj, on: true }], right: [{ t: 'Return Value', c: C.vec, on: true }] },
  { x: 446, y: 686, w: 134, h: 48, tone: 'pure', name: 'GetActorLocation', sub: true, left: [{ t: 'Target', c: C.obj, on: true }], right: [{ t: 'Return Value', c: C.vec, on: true }] },
  {
    x: 619, y: 513, w: 189, h: 154, tone: 'time', name: 'MoveTo',
    left: [{ t: 'Play', on: true }, { t: 'Play from Start' }, { t: 'Stop' }, { t: 'Reverse' }, { t: 'Reverse from End' }, { t: 'Set New Time' }, { t: 'New Time', c: C.flt, value: '0,0', h: 20 }],
    right: [{ t: 'Update', on: true }, { t: 'Finished', on: true }, { t: 'Direction', c: C.byte }, { t: 'Smooth Larp Alfa', c: C.flt, on: true }, { t: 'New Track 1', c: C.flt, on: true }],
  },
  { x: 900, y: 513, w: 86, h: 77, tone: 'plain', name: 'Sequence', left: [{ on: true }], right: [{ t: 'Then 0', on: true }, { t: 'Then 1', on: true }, { t: 'Add pin', add: true, h: 26 }] },
  { x: 900, y: 675, w: 130, h: 72, tone: 'pure', name: 'Lerp (Vector)', left: [{ t: 'A', c: C.vec, on: true }, { t: 'B', c: C.vec, on: true }, { t: 'Alpha', c: C.flt, on: true }], right: [{ t: 'Return Value', c: C.vec, on: true }] },
  { x: 835, y: 416, w: 134, h: 48, tone: 'pure', name: 'Get Actor Scale 3D', sub: true, left: [{ t: 'Target', c: C.obj, on: true }], right: [{ t: 'Return Value', c: C.vec, on: true }] },
  { x: 1278, y: 340, w: 119, h: 85, tone: 'call', name: 'Set Actor Scale 3D', sub: true, left: [{ on: true }, { t: 'Target', c: C.obj, on: true, h: 17.5 }, { t: 'New Scale 3D', c: C.vec, on: true }], right: [{}] },
  {
    x: 1267, y: 437.500, w: 175, h: 127, tone: 'call', name: 'SetActorLocation', sub: true,
    left: [{ on: true }, { t: 'Target', c: C.obj, on: true }, { t: 'New Location', c: C.vec, on: true }, { t: 'Sweep', c: C.bool, check: true, h: 20.5 }, { t: 'Teleport', c: C.bool, check: true, h: 23 }],
    right: [{}, { t: 'Sweep Hit Result', c: C.struct }, { t: 'Return Value', c: C.bool }],
  },
  { x: 1678, y: 437.500, w: 97, h: 67, tone: 'call', name: 'DestroyActor', sub: true, left: [{ on: true }, { t: 'Target', c: C.obj, on: true }], right: [{}] },
];

const selves = [[327, 632], [727, 437], [1148, 394], [1137, 480], [1569, 480]];

const wires: { d: string; c: string; w?: number }[] = [
  { c: C.obj, d: 'M279 558.500C305 558.500 318 587.300 346 587.300' },
  { c: C.obj, d: 'M300 647.500C330 647.500 312 603 346 603' },
  { c: C.obj, d: 'M300 647.500C365 647.500 380 723.300 454 723.300' },
  { c: C.obj, d: 'M405 643C425 643 432 658.700 454 658.700' },
  { c: C.obj, d: 'M802 448.500C820 448.500 825 453.300 843 453.300' },
  { c: C.obj, d: 'M1225 405.500C1250 405.500 1262 396.700 1286 396.700' },
  { c: C.obj, d: 'M1214 491.500 1275 494.300' },
  { c: C.obj, d: 'M1646 491.500 1686 494' },
  { c: C.bool, d: 'M424 595C458 595 455 558.500 486 558.500' },
  { c: C.vec, d: 'M571 659C603 659 584 701.500 609.700 701.500H908' },
  { c: C.vec, d: 'M571 723.300H836.700C860 723.300 885 719 908 719' },
  { c: C.flt, d: 'M796 594.700C889 594.700 818 736 908 736' },
  { c: C.flt, d: 'M796 611.700H983' },
  { c: C.vec, d: 'M1048 611.500C1141 611.500 1056 438 1146 438' },
  { c: C.vec, d: 'M960 453.500H1146' },
  { c: C.vec, d: 'M1219 436.700C1248 436.700 1256 414 1286 414' },
  { c: C.vec, d: 'M1021 701.700C1180 701.700 1116 511.500 1275 511.500' },
  { c: '#fff', w: 2.400, d: 'M280 540.500H486' },
  { c: '#fff', w: 2.400, d: 'M586 540.500H627' },
  { c: '#fff', w: 2.400, d: 'M799 540.500H908' },
  { c: '#fff', w: 2.400, d: 'M978 540.500C1050 540.500 965 377.500 1041.800 377.500L1286 379' },
  { c: '#fff', w: 2.400, d: 'M978 559.500C1030 559.500 990 474.500 1041.800 474.500L1275 476.300' },
  { c: '#fff', w: 2.400, d: 'M799 559.500C880 559.500 760 755.500 847.500 755.500H1452.500C1592 755.500 1425 474.500 1560.700 474.500L1686 476.300' },
];

const knots: [number, number, string][] = [
  [1041.8, 377.5, '#fff'], [1041.8, 474.5, '#fff'], [847.5, 755.5, '#fff'], [1452.5, 755.5, '#fff'], [1560.7, 474.5, '#fff'],
  [609.7, 701.5, C.vec], [804.5, 701.5, C.vec], [836.7, 723.2, C.vec],
];

const Grid = () => {
  const step = 86.35;
  const lines: React.ReactNode[] = [];
  for (let i = -4; i < 160; i++) {
    const x = Math.floor(143.4 + (i * step) / 8);
    const major = i % 8 === 0;
    lines.push(<rect key={`v${i}`} x={x} y={183} width={1} height={594} fill={major ? '#000' : '#fff'} opacity={major ? 0.32 : 0.062} />);
  }
  for (let i = -6; i < 52; i++) {
    const y = Math.floor(242.3 + (i * step) / 8);
    const major = i % 8 === 0;
    lines.push(<rect key={`h${i}`} x={104} y={y} width={1675} height={1} fill={major ? '#000' : '#fff'} opacity={major ? 0.32 : 0.062} />);
  }
  return <Layer width="1673" height="594" viewBox="104 183 1673 594">{lines}</Layer>;
};

const Wires = () => (
  <Layer width="1673" height="594" viewBox="104 183 1673 594">
    {wires.map((w, i) => (
      <path key={i} d={w.d} stroke={w.c} strokeWidth={w.w ?? 1.7} fill="none" opacity={w.w ? 1 : 0.88} />
    ))}
    {knots.map(([x, y, c], i) => (
      <g key={i} fill={c}>
        <circle cx={x} cy={y} r={3.7} />
        <path d={`M${x + 3.5} ${y - 2}L${x + 6} ${y}L${x + 3.5} ${y + 2}Z`} />
      </g>
    ))}
  </Layer>
);

const Graph = () => (
  <Canvas>
    <CommentBox />
    <Grid />
    <CommentTitle>Event Move And Scale Animation To Target and on Finished Destroy Selfe</CommentTitle>
    <Watermark>BLUEPRINT</Watermark>
    <Wires />
    {nodes.map((n, i) => <GraphNode key={i} n={n} />)}
    {selves.map(([x, y], i) => (
      <SelfPill key={i} $x={x} $y={y}><span>Self</span><DataPin c={C.obj} on /></SelfPill>
    ))}
    <CompactBox $x={338} $y={578} $w={97} $h={34} $pad={0.5}>
      <CompactPins><Row p={{ c: C.obj, on: true, h: 15.5 }} /><Row p={{ c: C.obj, on: true, h: 15.5 }} /></CompactPins>
      <CompactLabel $size={15} $mt={8}>==</CompactLabel>
      <CompactPins $mt={8}><Row p={{ c: C.bool, on: true, h: 15.5 }} /></CompactPins>
    </CompactBox>
    <CompactBox $x={1137} $y={426} $w={93} $h={39} $pad={3.2}>
      <CompactPins><Row p={{ c: C.vec, on: true, h: 15.5 }} /><Row p={{ c: C.vec, on: true, h: 15.5 }} /></CompactPins>
      <CompactLabel $size={15} $mt={8}>×</CompactLabel>
      <CompactPins $mt={-1.5}><Row p={{ c: C.vec, on: true, h: 15.5 }} /></CompactPins>
      <AddPin>Add pin<Plus s={7} w={1.8} /></AddPin>
    </CompactBox>
    <CompactBox $x={975} $y={599} $w={84} $h={25} $pad={3.7}>
      <CompactPins><Row p={{ c: C.flt, on: true, h: 15.5 }} /></CompactPins>
      <Dot />
      <CompactPins><Row p={{ c: C.vec, on: true, h: 15.5 }} /></CompactPins>
    </CompactBox>
    <Vignette />
    <Bubble>Event Move And Scale Animation To Target and on Finished Destroy Selfe</Bubble>
    <NavBar>
      <NavSlot $w={33} $pl={7}>
        <svg width="19" height="19" viewBox="0 0 19 19"><path d="M9.500 1 12 7H18.200L13.200 11 15 17.500 9.500 13.800 4 17.500 5.800 11 .8 7H7Z" fill="none" stroke="#d5d5d5" strokeWidth="1.300" /></svg>
      </NavSlot>
      <NavLine />
      <NavSlot $w={42} $pl={12}><NavArrow c="#e4f3f3" /></NavSlot>
      <NavSlot $w={44} $pl={12}><NavArrow c="#838383" flip /></NavSlot>
      <NavLine />
      <NavSlot $w={49} $pl={11}><GraphIcon s={24} /></NavSlot>
      <NavSlot $w={101}>BP_Crystal</NavSlot>
      <NavSlot $w={18}>
        <svg width="9" height="15" viewBox="0 0 9 15"><path d="M1 1 7.500 7.500 1 14" stroke="#eee" strokeWidth="2" fill="none" /></svg>
      </NavSlot>
      <NavSlot $w={120}>Event Graph</NavSlot>
      <ZoomLabel>Zoom -3</ZoomLabel>
    </NavBar>
  </Canvas>
);

const tools: [string, number, React.ReactNode][][] = [
  [['Save', 52, <SaveIcon />], ['Browse', 53, <BrowseIcon />]],
  [['Find', 52, <FindIcon />], ['Hide Unrelated', 94, <HideIcon />]],
  [['Class Settings', 94, <SettingsIcon />], ['Class Defaults', 94, <DefaultsIcon />], ['Simulation', 76, <SimulationIcon />]],
];

const ToolGroup = ({ items }: { items: [string, number, React.ReactNode][] }) => (
  <>
    {items.map(([name, w, icon]) => (
      <Tool key={name} $w={w}>{icon}<span>{name}</span></Tool>
    ))}
  </>
);

export default function App() {
  return (
    <Screen>
      <Global />
      <MainTitleBar>
        <TitleLeft>
          <LogoSlot $w={38}><UnrealLogo /></LogoSlot>
          <DocTab $w={208} $h={26} $active><TabBg w={208} h={26} active /><DocTitle $flush>MainLevel</DocTitle></DocTab>
        </TitleLeft>
        <MainBadge />
        <ProjectArea>
          <ProjectPlate>BallRunner_Krzysztof</ProjectPlate>
          <WindowButtons $w={84}>
            <WindowButton $w={25}><MinIcon /></WindowButton>
            <WindowButton $w={22}><RestoreIcon /></WindowButton>
            <WindowButton $w={36}><XIcon /></WindowButton>
          </WindowButtons>
        </ProjectArea>
      </MainTitleBar>
      <Rule />
      <TitleBar>
        <TitleLeft>
          <LogoSlot $w={36}><UnrealLogo /></LogoSlot>
          <DocTab $w={210} $h={25} $active>
            <TabBg w={210} h={25} active /><SphereTile /><DocTitle>BP_Crystal*</DocTitle><CloseMark $right={20}><Cross /></CloseMark>
          </DocTab>
          <DocTab $w={201} $h={25} $overlap>
            <TabBg w={201} h={25} /><PawnTile /><DocTitle>BP_PlayerPawn</DocTitle><CloseMark $right={19}><Cross /></CloseMark>
          </DocTab>
        </TitleLeft>
        <EditorBadge />
        <WindowButtons $w={88}>
          <WindowButton $w={25}><MinIcon /></WindowButton>
          <WindowButton $w={22}><MaxIcon /></WindowButton>
          <WindowButton $w={39}><XIcon /></WindowButton>
        </WindowButtons>
      </TitleBar>
      <MenuBar>
        <MenuItem $w={38}>File</MenuItem>
        <MenuItem $w={42}>Edit</MenuItem>
        <MenuItem $w={49}>Asset</MenuItem>
        <MenuItem $w={46} $on>View</MenuItem>
        <MenuItem $w={54}>Debug</MenuItem>
        <MenuItem $w={65}>Window</MenuItem>
        <MenuItem $w={42}>Help</MenuItem>
        <ParentClass><span>Parent class:</span><b>Actor</b></ParentClass>
      </MenuBar>
      <Workspace>
        <SideColumn>
          <PanelTab $w={85}><ComponentsIcon /><PanelTitle>Components</PanelTitle><CloseMark><Cross /></CloseMark></PanelTab>
          <ComponentsPanel>
            <GreenButton $w={100} $h={25} $ml={5} $size={14.4} $bold $pl={7}><Plus s={10} w={2.6} />Add Comp</GreenButton>
            <TreeRow $indent={5} $gap={7} $h={26} $size={12.1}>
              <svg width="14" height="14"><circle cx="7" cy="7" r="6" fill="#e8e8e6" /><path d="M3 12.500Q9 15 13.500 9" stroke="#1b1b1b" fill="none" /></svg>
              <span>BP_Crystal (self)</span>
            </TreeRow>
            <Divider />
            <TreeRow $indent={14} $gap={1} $h={18}><Caret /><CubeIcon a="#a5bcf0" b="#7391da" c="#4b66b0" />Trigger</TreeRow>
            <TreeRow $indent={24} $gap={3} $size={12.4}><Caret /><HouseIcon c="#b9b9b9" />Crystal</TreeRow>
            <TreeRow $indent={46} $size={12.4}><HouseIcon c="#b9b9b9" />Crystal</TreeRow>
          </ComponentsPanel>
          <PanelTab $w={85} $gap={5}><BlueprintIcon /><PanelTitle>My Blueprint</PanelTitle><CloseMark><Cross /></CloseMark></PanelTab>
          <BlueprintPanel>
            <GreenButton $w={84} $h={25} $ml={6} $size={12.6} $pl={2}><Plus s={10} w={3} />Add New<Down $c="#fff" /></GreenButton>
            <Category $mt={8}><Caret /><CategoryName>Graphs</CategoryName><PlusButton><Plus /></PlusButton></Category>
            <TreeRow $indent={2} $w={83} $gap={2} $h={21}><Caret /><GraphIcon />EventGraph</TreeRow>
            <TreeRow $indent={22} $w={83} $h={19} $gap={3}><Diamond s={16} />Event Actor</TreeRow>
            <Category $mt={2}><Caret /><CategoryName>Functions</CategoryName><PlusButton><Plus /></PlusButton></Category>
            <TreeRow $indent={12} $w={83} $h={22} $gap={4}><OverrideIcon />Construction</TreeRow>
            <Category><Caret $hidden /><CategoryName>Macros</CategoryName><PlusButton><Plus /></PlusButton></Category>
            <Category $mt={2}><Caret /><CategoryName>Variables</CategoryName><PlusButton><Plus /></PlusButton></Category>
            <TreeRow $indent={2} $w={83} $gap={0} $h={18} $bold $size={12.5}><Caret />Components</TreeRow>
            <TreeRow $indent={22} $w={83} $h={21}><CubeIcon a="#2f8bff" b="#1668e0" c="#0a3c96" />Trigger</TreeRow>
            <TreeRow $indent={23} $w={83} $gap={6}><HouseIcon c="#0d7fb8" />Crystal</TreeRow>
            <TreeRow $indent={23} $w={83} $gap={6}><HouseIcon c="#0d7fb8" />Crystal</TreeRow>
            <TreeRow $indent={22} $w={83} $gap={3}><ClockIcon s={16} c="#17a3f5" />MoveTo</TreeRow>
            <Category $mt={1}><Caret $hidden /><CategoryName>Event Dispatchers</CategoryName><PlusButton><Plus /></PlusButton></Category>
          </BlueprintPanel>
        </SideColumn>
        <CenterColumn>
          <Toolbar>
            <Tool $w={60}><CompileIcon /><span>Compile</span></Tool>
            <ToolArrow><Down /></ToolArrow>
            <ToolSeparator />
            <ToolGroup items={tools[0]} />
            <ToolSeparator />
            <ToolGroup items={tools[1]} />
            <ToolArrow $ml={3}><Down /></ToolArrow>
            <ToolSeparator />
            <ToolGroup items={tools[2]} />
            <ToolSeparator />
            <Tool $w={52}><PlayIcon /><span>Play</span></Tool>
            <ToolArrow $ml={1}><Down /></ToolArrow>
            <DebugFilter><Combo>No debug object selected<Down $c="#111" /></Combo>Debug Filter</DebugFilter>
          </Toolbar>
          <GraphTabs>
            <GraphTab><ViewportIcon /><GraphTabName>Viewport</GraphTabName><CloseMark><Cross /></CloseMark></GraphTab>
            <GraphTab><FnMark c="#a9b8ea" w={13} h={16} /><GraphTabName>Construction Scrip</GraphTabName><CloseMark><Cross /></CloseMark></GraphTab>
            <GraphTab $on><GraphIcon /><GraphTabName>Event Graph</GraphTabName><CloseMark><Cross /></CloseMark></GraphTab>
            <GraphTab><ClockIcon s={14} c="#dcdcdc" /><GraphTabName>MoveTo_Template</GraphTabName><CloseMark><Cross /></CloseMark></GraphTab>
          </GraphTabs>
          <GraphFrame><Graph /></GraphFrame>
        </CenterColumn>
        <DetailsColumn>
          <PanelTab $w={122}><MagnifierInfo /><PanelTitle>Details</PanelTitle><CloseMark><Cross /></CloseMark></PanelTab>
          <DetailsBody />
        </DetailsColumn>
      </Workspace>
      <BottomArea>
        <Browser>
          <BrowserBar>
            <GreenButton $w={121} $h={21} $ml={0} $size={14.5} $bold $pl={7} $lift={5}>
              <svg width="14" height="15" viewBox="0 0 14 15"><path d="M0 0H7V5H12V15H0Z" fill="#fff" /><path d="M8 0 12 4H8Z" fill="#fff" /></svg>
              Add/Import
              <Down $c="#fff" />
            </GreenButton>
            <BrowserCell $w={97} $pl={9} $gap={5}>
              <svg width="13" height="14" viewBox="0 0 13 14"><path d="M1 1H10L12.300 3.500V13H1ZM3.500 1V5H9V1M3 13V8.500H10V13M5 10.500H8" fill="none" stroke="#eee" strokeWidth="1.300" /></svg>
              Save All
            </BrowserCell>
            <BrowserCell $w={49} $pl={9} $gap={6}>
              <svg width="12" height="11" viewBox="0 0 12 11"><path d="M6 1 1.500 5.500 6 10M1.500 5.500H12" fill="none" stroke="#fff" strokeWidth="2" /></svg>
              <svg width="12" height="11" viewBox="0 0 12 11"><path d="M6 1 10.500 5.500 6 10M10.500 5.500H0" fill="none" stroke="#8c8c8c" strokeWidth="2" /></svg>
            </BrowserCell>
            <BrowserLine />
            <BrowserCell $w={26}>
              <svg width="16" height="12" viewBox="0 0 16 12"><path d="M0 0H5L6.500 2H13V4H4L0 10ZM4.500 5H16L12.500 12H1Z" fill="#eee" /></svg>
            </BrowserCell>
            <BrowserCell $w={67}>Content</BrowserCell>
            <BrowserCell $w={18}><CrumbArrow /></BrowserCell>
            <BrowserCell $w={83}>Blueprints</BrowserCell>
            <BrowserCell $w={18}><CrumbArrow /></BrowserCell>
            <BrowserCell $w={59}>Actors</BrowserCell>
            <BrowserCell $w={18}><CrumbArrow /></BrowserCell>
            <BrowserCell $w={683}>Cyrstal</BrowserCell>
            <svg width="14" height="15" viewBox="0 0 14 15"><path d="M1.500 8V4.500C1.500 1 6.500 1 6.500 4.500V6" fill="none" stroke="#ccc" strokeWidth="1.300" /><rect x="4.500" y="6" width="9" height="7.500" fill="#ddd" /><rect x="8.500" y="8" width="1.500" height="3" fill="#333" /></svg>
          </BrowserBar>
          <FilterRow>
            <svg width="16" height="8" viewBox="0 0 16 8"><path d="M0 3.500H3M5 3.500H16" stroke="#aaa" strokeWidth="3" /></svg>
            <FilterLabel>
              <svg width="9" height="12" viewBox="0 0 9 12"><path d="M0 1H9L5.500 5V11H3.500V5Z" fill="#ddd" /></svg>
              Filters
            </FilterLabel>
            <SearchField>
              <span>Search Cyrstal</span>
              <svg width="14" height="14" viewBox="0 0 14 14"><circle cx="7" cy="7" r="4.500" fill="none" stroke="#111" strokeWidth="2" /></svg>
            </SearchField>
            <SaveSearch width="12" height="12" viewBox="0 0 12 12"><path d="M1 1H9L11 3V11H1ZM3.500 1V5H8V1" fill="none" stroke="#999" strokeWidth="1.200" /></SaveSearch>
          </FilterRow>
        </Browser>
        <DetailsStrip>
          <PropertyNames>
            <PropertyGroup><Caret />Collision</PropertyGroup>
          </PropertyNames>
        </DetailsStrip>
      </BottomArea>
    </Screen>
  );
}
